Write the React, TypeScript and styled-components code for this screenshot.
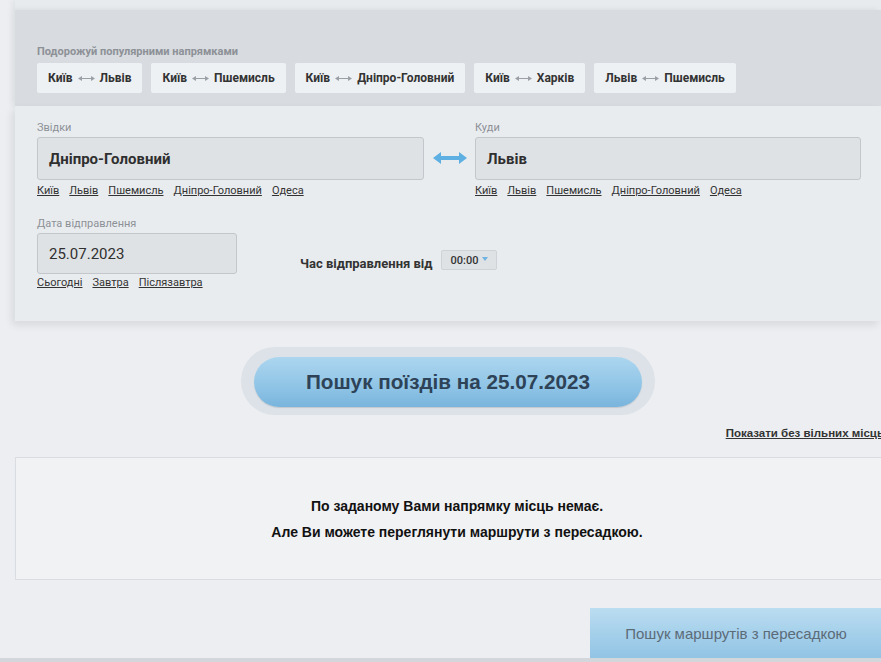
import React from "react";
import styled, { createGlobalStyle } from "styled-components";

const GlobalStyle = createGlobalStyle`
  html, body {
    margin: 0;
    padding: 0;
    background: #eceef1;
    font-family: Roboto, "Liberation Sans", sans-serif;
    color: #333;
    overflow: hidden;
  }
`;

const Page = styled.div`
  padding-left: 15px;
  border-bottom: 4px solid #d3d6da;
`;

const Main = styled.div`
  width: 866px;
  display: flex;
  flex-direction: column;
`;

const TopStrip = styled.div`
  height: 10px;
  background: #e8ebee;
  box-shadow: -3px 0 6px rgba(0, 0, 0, 0.06);
`;

const RoutesPanel = styled.div`
  background: #d8dbdf;
  padding: 35px 22px 13px;
  box-shadow: -3px 0 6px rgba(0, 0, 0, 0.08);
`;

const PanelCaption = styled.div`
  font-size: 11px;
  line-height: 13px;
  font-weight: 700;
  color: #8d9197;
`;

const ChipRow = styled.div`
  display: flex;
  gap: 9px;
  margin-top: 5px;
`;

const Chip = styled.div`
  height: 30px;
  padding: 0 11px;
  display: flex;
  align-items: center;
  gap: 5px;
  background: #eef1f4;
  border-radius: 2px;
  font-size: 12px;
  font-weight: 700;
  color: #333;
  white-space: nowrap;
`;

const FormPanel = styled.div`
  height: 215px;
  box-sizing: border-box;
  background: #e9ecef;
  padding: 15px 20px 0 22px;
  box-shadow: -3px 4px 8px rgba(0, 0, 0, 0.09);
`;

const PlaceRow = styled.div`
  display: grid;
  grid-template-columns: 387px 51px 386px;
`;

const Field = styled.div`
  display: flex;
  flex-direction: column;
`;

const FieldLabel = styled.div`
  font-size: 11px;
  line-height: 13px;
  color: #8d9197;
`;

const Input = styled.div<{ $height: number; $bold?: boolean }>`
  height: ${({ $height }) => $height}px;
  box-sizing: border-box;
  margin-top: 3px;
  padding: 0 11px;
  display: flex;
  align-items: center;
  background: #dfe2e5;
  border: 1px solid #c3c7cc;
  border-radius: 3px;
  font-size: 15px;
  font-weight: ${({ $bold }) => ($bold ? 700 : 400)};
  color: #2f2f2f;
`;

const QuickLinks = styled.div<{ $top: number }>`
  display: flex;
  gap: 10px;
  margin-top: ${({ $top }) => $top}px;
  font-size: 11px;
  line-height: 12px;
`;

const QuickLink = styled.a`
  color: #333;
  text-decoration: underline;
  cursor: pointer;
`;

const SwapCell = styled.div`
  display: flex;
  justify-content: center;
  padding-top: 31px;
`;

const DateRow = styled.div`
  display: flex;
  margin-top: 20px;
`;

const DateField = styled(Field)`
  width: 200px;
`;

const TimeGroup = styled.div`
  display: flex;
  align-items: center;
  gap: 9px;
  margin-left: 63px;
  padding-top: 33px;
  height: 20px;
  font-size: 13px;
  font-weight: 700;
  color: #333;
`;

const TimeLabel = styled.span`
  padding-top: 6px;
`;

const TimeSelect = styled.div`
  width: 56px;
  height: 20px;
  box-sizing: border-box;
  display: flex;
  align-items: center;
  justify-content: center;
  gap: 4px;
  background: #dfe2e5;
  border: 1px solid #cfd3d7;
  border-radius: 2px;
  font-size: 11px;
  font-weight: 500;
  color: #333;
`;

const Caret = styled.span`
  width: 0;
  height: 0;
  border-left: 3px solid transparent;
  border-right: 3px solid transparent;
  border-top: 4px solid #6fb3e2;
  margin-bottom: 2px;
`;

const SearchRing = styled.div`
  align-self: center;
  margin-top: 26px;
  width: 414px;
  height: 68px;
  box-sizing: border-box;
  padding: 10px 13px;
  background: #dce2e8;
  border-radius: 34px;
`;

const SearchButton = styled.button`
  width: 100%;
  height: 50px;
  border: none;
  border-radius: 25px;
  background: linear-gradient(to bottom, #acd6ef 0%, #8fc4e6 60%, #79b4dc 100%);
  box-shadow: 0 1px 1px rgba(0, 0, 0, 0.12);
  font-family: "Liberation Sans", Arial, sans-serif;
  font-size: 20.7px;
  font-weight: 700;
  color: #2e4357;
  cursor: pointer;
`;

const ExtraRow = styled.div`
  display: flex;
  justify-content: flex-end;
  margin-top: 12px;
  margin-right: -3px;
  line-height: 12px;
`;

const ExtraLink = styled.a`
  font-family: "Liberation Sans", Arial, sans-serif;
  font-size: 11.5px;
  font-weight: 700;
  color: #333;
  text-decoration: underline;
  white-space: nowrap;
`;

const ResultBox = styled.div`
  margin-top: 18px;
  margin-right: -18px;
  height: 123px;
  box-sizing: border-box;
  display: flex;
  flex-direction: column;
  justify-content: center;
  align-items: center;
  background: #f1f2f4;
  border: 1px solid #d9dce0;
  font-family: "Liberation Sans", Arial, sans-serif;
  font-size: 14px;
  font-weight: 700;
  line-height: 26px;
  color: #111;
`;

const Footer = styled.div`
  display: flex;
  justify-content: flex-end;
  margin-top: 28px;
`;

const TransferButton = styled.button`
  width: 292px;
  height: 50px;
  margin-right: -1px;
  border: none;
  background: linear-gradient(to bottom, #bbddf1 0%, #a3cfea 55%, #92c4e4 100%);
  font-family: "Liberation Sans", Arial, sans-serif;
  font-size: 15px;
  color: #5c6b78;
  cursor: pointer;
`;

const ChipArrow = () => (
  <svg width="17" height="5" viewBox="0 0 17 5">
    <path d="M0 2.5 L4 0 L4 5 Z M17 2.5 L13 0 L13 5 Z" fill="#9aa0a6" />
    <path d="M3 2.5 H14" stroke="#9aa0a6" strokeWidth="1" />
  </svg>
);

const SwapArrow = () => (
  <svg width="34" height="12" viewBox="0 0 34 12">
    <path d="M0 6 L8 0 L8 12 Z M34 6 L26 0 L26 12 Z" fill="#5eb0e2" />
    <path d="M6 6 H28" stroke="#5eb0e2" strokeWidth="4" />
  </svg>
);

const popular = [
  ["Київ", "Львів"],
  ["Київ", "Пшемисль"],
  ["Київ", "Дніпро-Головний"],
  ["Київ", "Харків"],
  ["Львів", "Пшемисль"],
];

const cities = ["Київ", "Львів", "Пшемисль", "Дніпро-Головний", "Одеса"];
const days = ["Сьогодні", "Завтра", "Післязавтра"];

const App = () => {
  return (
    <Page>
      <GlobalStyle />
      <Main>
        <TopStrip />
        <RoutesPanel>
          <PanelCaption>Подорожуй популярними напрямками</PanelCaption>
          <ChipRow>
            {popular.map(([from, to]) => (
              <Chip key={from + to}>
                {from}
                <ChipArrow />
                {to}
              </Chip>
            ))}
          </ChipRow>
        </RoutesPanel>
        <FormPanel>
          <PlaceRow>
            <Field>
              <FieldLabel>Звідки</FieldLabel>
              <Input $height={43} $bold>Дніпро-Головний</Input>
              <QuickLinks $top={5}>
                {cities.map((c) => (
                  <QuickLink key={c}>{c}</QuickLink>
                ))}
              </QuickLinks>
            </Field>
            <SwapCell>
              <SwapArrow />
            </SwapCell>
            <Field>
              <FieldLabel>Куди</FieldLabel>
              <Input $height={43} $bold>Львів</Input>
              <QuickLinks $top={5}>
                {cities.map((c) => (
                  <QuickLink key={c}>{c}</QuickLink>
                ))}
              </QuickLinks>
            </Field>
          </PlaceRow>
          <DateRow>
            <DateField>
              <FieldLabel>Дата відправлення</FieldLabel>
              <Input $height={41}>25.07.2023</Input>
              <QuickLinks $top={3}>
                {days.map((d) => (
                  <QuickLink key={d}>{d}</QuickLink>
                ))}
              </QuickLinks>
            </DateField>
            <TimeGroup>
              <TimeLabel>Час відправлення від</TimeLabel>
              <TimeSelect>
                00:00
                <Caret />
              </TimeSelect>
            </TimeGroup>
          </DateRow>
        </FormPanel>
        <SearchRing>
          <SearchButton>Пошук поїздів на 25.07.2023</SearchButton>
        </SearchRing>
        <ExtraRow>
          <ExtraLink>Показати без вільних місць</ExtraLink>
        </ExtraRow>
        <ResultBox>
          <div>По заданому Вами напрямку місць немає.</div>
          <div>Але Ви можете переглянути маршрути з пересадкою.</div>
        </ResultBox>
        <Footer>
          <TransferButton>Пошук маршрутів з пересадкою</TransferButton>
        </Footer>
      </Main>
    </Page>
  );
};

export default App;
